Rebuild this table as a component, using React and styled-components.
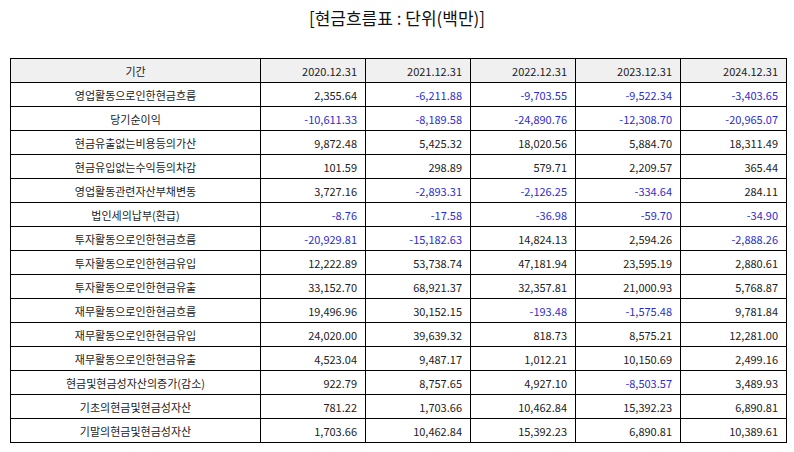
import styled, { createGlobalStyle } from 'styled-components'

const GlobalStyle = createGlobalStyle`
    body {
        margin: 0;
        background: #fff;
        font-family: "Noto Sans CJK KR", "Noto Sans", sans-serif;
        color: #222;
    }
`;

const Page = styled.div`
    width: 794px;
    height: 452px;
    padding: 0 10px;
    box-sizing: border-box;
`;

const Title = styled.h2`
    margin: 0;
    height: 58px;
    padding-top: 5px;
    box-sizing: border-box;
    text-align: center;
    font-size: 17px;
    font-weight: 400;
    color: #111;
`;

const Table = styled.table`
    width: 776px;
    border-collapse: collapse;
    table-layout: fixed;
    font-size: 11px;
`;

const Col = styled.col`
    width: ${(props) => props.$w}px;
`;

const Th = styled.th`
    height: 23px;
    padding: 0 8px;
    border: 1px solid #000;
    background: #f0f0f0;
    font-weight: 400;
    color: #222;
    text-align: ${(props) => (props.$label ? 'center' : 'right')};
`;

const Td = styled.td`
    height: 23px;
    padding: 0 8px;
    border: 1px solid #000;
    text-align: ${(props) => (props.$label ? 'center' : 'right')};
    color: ${(props) => (props.$negative ? '#2d2dcf' : '#222')};
`;

const widths = [250, 105, 105, 105, 105, 106];

const years = ['2020.12.31', '2021.12.31', '2022.12.31', '2023.12.31', '2024.12.31'];

const rows = [
    ['영업활동으로인한현금흐름', '2,355.64', '-6,211.88', '-9,703.55', '-9,522.34', '-3,403.65'],
    ['당기순이익', '-10,611.33', '-8,189.58', '-24,890.76', '-12,308.70', '-20,965.07'],
    ['현금유출없는비용등의가산', '9,872.48', '5,425.32', '18,020.56', '5,884.70', '18,311.49'],
    ['현금유입없는수익등의차감', '101.59', '298.89', '579.71', '2,209.57', '365.44'],
    ['영업활동관련자산부채변동', '3,727.16', '-2,893.31', '-2,126.25', '-334.64', '284.11'],
    ['법인세의납부(환급)', '-8.76', '-17.58', '-36.98', '-59.70', '-34.90'],
    ['투자활동으로인한현금흐름', '-20,929.81', '-15,182.63', '14,824.13', '2,594.26', '-2,888.26'],
    ['투자활동으로인한현금유입', '12,222.89', '53,738.74', '47,181.94', '23,595.19', '2,880.61'],
    ['투자활동으로인한현금유출', '33,152.70', '68,921.37', '32,357.81', '21,000.93', '5,768.87'],
    ['재무활동으로인한현금흐름', '19,496.96', '30,152.15', '-193.48', '-1,575.48', '9,781.84'],
    ['재무활동으로인한현금유입', '24,020.00', '39,639.32', '818.73', '8,575.21', '12,281.00'],
    ['재무활동으로인한현금유출', '4,523.04', '9,487.17', '1,012.21', '10,150.69', '2,499.16'],
    ['현금및현금성자산의증가(감소)', '922.79', '8,757.65', '4,927.10', '-8,503.57', '3,489.93'],
    ['기초의현금및현금성자산', '781.22', '1,703.66', '10,462.84', '15,392.23', '6,890.81'],
    ['기말의현금및현금성자산', '1,703.66', '10,462.84', '15,392.23', '6,890.81', '10,389.61'],
];

const App = () => {
  return (
    <Page>
        <GlobalStyle />
        <Title>[현금흐름표 : 단위(백만)]</Title>
        <Table>
            <colgroup>
                {widths.map((w, i) => (
                    <Col key={i} $w={w} />
                ))}
            </colgroup>
            <thead>
                <tr>
                    <Th $label>기간</Th>
                    {years.map((y) => (
                        <Th key={y}>{y}</Th>
                    ))}
                </tr>
            </thead>
            <tbody>
                {rows.map(([name, ...values]) => (
                    <tr key={name}>
                        <Td $label>{name}</Td>
                        {values.map((v, i) => (
                            <Td key={i} $negative={v.startsWith('-')}>{v}</Td>
                        ))}
                    </tr>
                ))}
            </tbody>
        </Table>
    </Page>
  )
};

export default App
